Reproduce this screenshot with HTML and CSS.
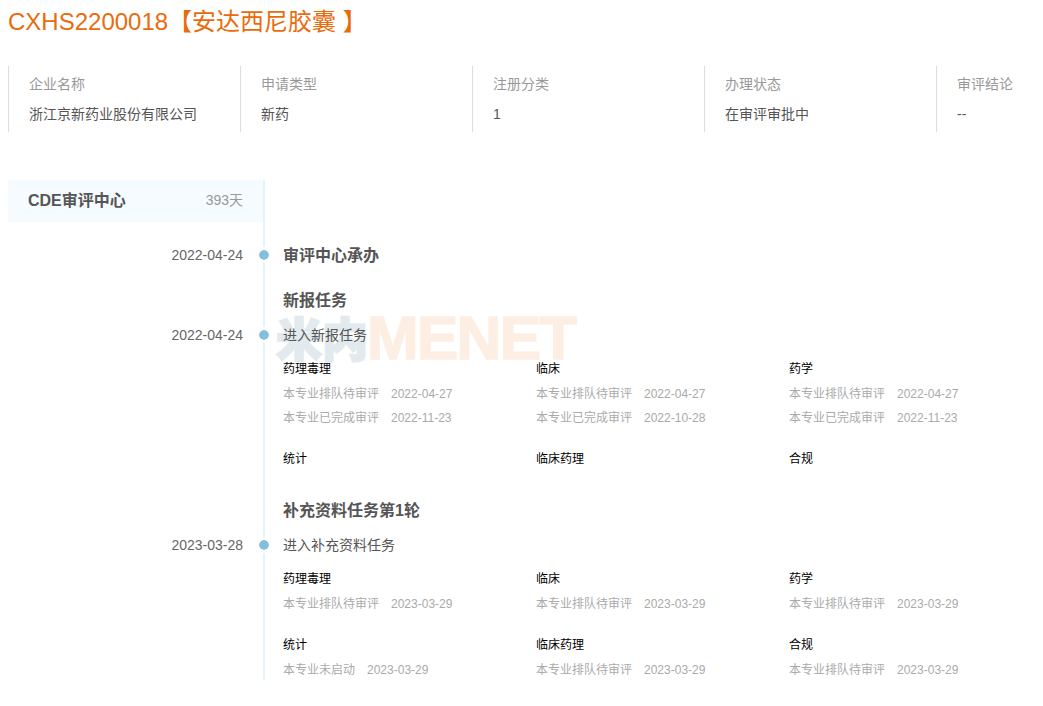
FILE: index.html
```html
<!DOCTYPE html>
<html lang="zh-CN">
<head>
<meta charset="utf-8">
<title>CXHS2200018</title>
<link rel="stylesheet" href="styles.css">
</head>
<body>
<div class="watermark"><span class="wm-cn">米内</span><span class="wm-en">MENET</span></div>
<h1 class="title">CXHS2200018【安达西尼胶囊 】</h1>
<div class="info">
  <div class="info-cell"><div class="info-label">企业名称</div><div class="info-value">浙江京新药业股份有限公司</div></div>
  <div class="info-cell"><div class="info-label">申请类型</div><div class="info-value">新药</div></div>
  <div class="info-cell"><div class="info-label">注册分类</div><div class="info-value">1</div></div>
  <div class="info-cell"><div class="info-label">办理状态</div><div class="info-value">在审评审批中</div></div>
  <div class="info-cell"><div class="info-label">审评结论</div><div class="info-value">--</div></div>
</div>
<div class="timeline">
  <div class="row">
    <div class="head"><span class="head-name">CDE审评中心</span><span class="head-days">393天</span></div>
    <div class="body"></div>
  </div>
  <div class="row">
    <div class="date dot first-date">2022-04-24</div>
    <div class="body first"><div class="step">审评中心承办</div></div>
  </div>
  <div class="row">
    <div class="date"></div>
    <div class="body"><div class="task">新报任务</div></div>
  </div>
  <div class="row">
    <div class="date dot">2022-04-24</div>
    <div class="body">
      <div class="entry">进入新报任务</div>
      <div class="majors">
        <div class="major"><div class="major-name">药理毒理</div><div class="major-line">本专业排队待审评<span class="major-date">2022-04-27</span></div><div class="major-line">本专业已完成审评<span class="major-date">2022-11-23</span></div></div>
        <div class="major"><div class="major-name">临床</div><div class="major-line">本专业排队待审评<span class="major-date">2022-04-27</span></div><div class="major-line">本专业已完成审评<span class="major-date">2022-10-28</span></div></div>
        <div class="major"><div class="major-name">药学</div><div class="major-line">本专业排队待审评<span class="major-date">2022-04-27</span></div><div class="major-line">本专业已完成审评<span class="major-date">2022-11-23</span></div></div>
        <div class="major"><div class="major-name">统计</div></div>
        <div class="major"><div class="major-name">临床药理</div></div>
        <div class="major"><div class="major-name">合规</div></div>
      </div>
    </div>
  </div>
  <div class="row">
    <div class="date"></div>
    <div class="body"><div class="task later">补充资料任务第1轮</div></div>
  </div>
  <div class="row">
    <div class="date dot">2023-03-28</div>
    <div class="body">
      <div class="entry">进入补充资料任务</div>
      <div class="majors final">
        <div class="major"><div class="major-name">药理毒理</div><div class="major-line">本专业排队待审评<span class="major-date">2023-03-29</span></div></div>
        <div class="major"><div class="major-name">临床</div><div class="major-line">本专业排队待审评<span class="major-date">2023-03-29</span></div></div>
        <div class="major"><div class="major-name">药学</div><div class="major-line">本专业排队待审评<span class="major-date">2023-03-29</span></div></div>
        <div class="major"><div class="major-name">统计</div><div class="major-line">本专业未启动<span class="major-date">2023-03-29</span></div></div>
        <div class="major"><div class="major-name">临床药理</div><div class="major-line">本专业排队待审评<span class="major-date">2023-03-29</span></div></div>
        <div class="major"><div class="major-name">合规</div><div class="major-line">本专业排队待审评<span class="major-date">2023-03-29</span></div></div>
      </div>
    </div>
  </div>
</div>
</body>
</html>
```
FILE: styles.css
```css
* { box-sizing: border-box; }
html { background: #fff; }
body {
  margin: 0;
  padding: 0 0 0 8px;
  font-family: "Liberation Sans", "Noto Sans CJK SC", sans-serif;
  font-size: 14px;
  color: #555;
  position: relative;
  height: 706px;
  overflow: hidden;
}
.watermark {
  position: absolute;
  left: 276px;
  top: 305px;
  height: 66px;
  z-index: -1;
  display: flex;
  align-items: center;
  white-space: nowrap;
}
.wm-cn {
  font-family: "Noto Sans CJK SC", sans-serif;
  font-weight: 900;
  font-size: 46px;
  width: 91px;
  line-height: 66px;
  margin-top: -4px;
  color: #e2eaee;
  -webkit-text-stroke: 2px #e2eaee;
}
.wm-en {
  font-weight: 700;
  font-size: 62px;
  letter-spacing: -1.7px;
  line-height: 66px;
  color: #fdeee3;
  -webkit-text-stroke: 1.5px #fdeee3;
}
.title {
  margin: 0;
  font-size: 24px;
  font-weight: 400;
  line-height: 44px;
  color: #e96c0c;
}
.info {
  display: grid;
  grid-template-columns: repeat(4, 232px) 1fr;
  margin-top: 22px;
}
.info-cell {
  height: 66px;
  padding: 3px 0 0 20px;
  border-left: 1px solid #ddd;
  line-height: 30px;
  white-space: nowrap;
}
.info-label { color: #999; }
.info-value { color: #555; }
.timeline { margin-top: 48px; }
.row { display: flex; }
.head {
  width: 255px;
  height: 42px;
  padding: 0 20px 4px;
  background: #f5fbff;
  display: flex;
  justify-content: space-between;
  align-items: center;
}
.head-name { font-size: 16px; font-weight: 700; color: #555; }
.head-days { color: #999; }
.date {
  width: 255px;
  flex: none;
  padding-right: 20px;
  text-align: right;
  line-height: 30px;
  color: #666;
  position: relative;
}
.first-date { margin-top: 18px; }
.dot::after {
  content: "";
  position: absolute;
  right: -9px;
  top: 7px;
  width: 10px;
  height: 10px;
  border: 3px solid #fff;
  border-radius: 50%;
  background: #86bddd;
  background-clip: padding-box;
}
.body {
  flex: 1;
  border-left: 2px solid #e3f2fb;
  padding-left: 18px;
}
.body.first { padding-top: 19px; }
.step, .task {
  font-size: 16px;
  font-weight: 700;
  line-height: 30px;
  color: #555;
}
.task { padding-top: 15px; height: 49px; }
.task.later { padding-top: 24px; height: 58px; }
.entry { line-height: 30px; color: #555; }
.majors {
  display: grid;
  grid-template-columns: repeat(3, 253px);
  margin-top: 7px;
}
.majors.final { margin-bottom: -2px; }
.major { padding-bottom: 17px; font-size: 12px; }
.major:nth-last-child(-n+3) { padding-bottom: 0; }
.major-name { line-height: 25px; color: #000; }
.major-line { line-height: 24px; color: #aaa; white-space: nowrap; }
.major-date { margin-left: 12px; }
```
